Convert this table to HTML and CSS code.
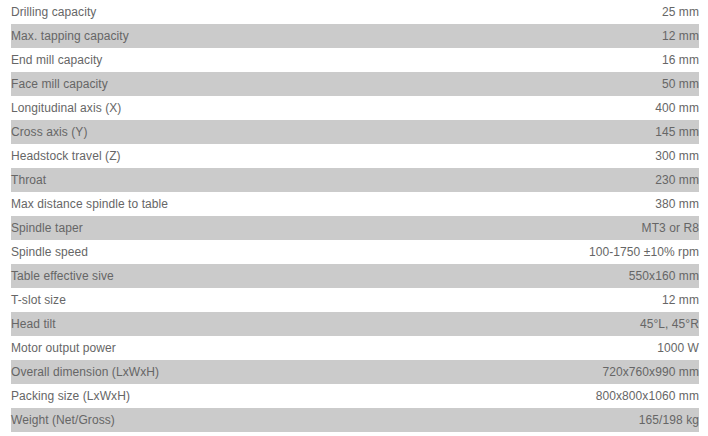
FILE: index.html
```html
<!DOCTYPE html>
<html>
<head>
<meta charset="utf-8">
<link rel="stylesheet" href="styles.css">
</head>
<body>
<table class="specs">
<tbody>
<tr><td>Drilling capacity</td><td class="val">25 mm</td></tr>
<tr><td>Max. tapping capacity</td><td class="val">12 mm</td></tr>
<tr><td>End mill capacity</td><td class="val">16 mm</td></tr>
<tr><td>Face mill capacity</td><td class="val">50 mm</td></tr>
<tr><td>Longitudinal axis (X)</td><td class="val">400 mm</td></tr>
<tr><td>Cross axis (Y)</td><td class="val">145 mm</td></tr>
<tr><td>Headstock travel (Z)</td><td class="val">300 mm</td></tr>
<tr><td>Throat</td><td class="val">230 mm</td></tr>
<tr><td>Max distance spindle to table</td><td class="val">380 mm</td></tr>
<tr><td>Spindle taper</td><td class="val">MT3 or R8</td></tr>
<tr><td>Spindle speed</td><td class="val">100-1750 ±10% rpm</td></tr>
<tr><td>Table effective sive</td><td class="val">550x160 mm</td></tr>
<tr><td>T-slot size</td><td class="val">12 mm</td></tr>
<tr><td>Head tilt</td><td class="val">45°L, 45°R</td></tr>
<tr><td>Motor output power</td><td class="val">1000 W</td></tr>
<tr><td>Overall dimension (LxWxH)</td><td class="val">720x760x990 mm</td></tr>
<tr><td>Packing size (LxWxH)</td><td class="val">800x800x1060 mm</td></tr>
<tr><td>Weight (Net/Gross)</td><td class="val">165/198 kg</td></tr>
</tbody>
</table>
</body>
</html>
```
FILE: styles.css
```css
html, body {
  margin: 0;
  padding: 0;
  background: #ffffff;
}
body {
  padding: 0 0 0 11px;
  font-family: "Liberation Sans", Arial, sans-serif;
  font-size: 12px;
  color: #666666;
}
.specs {
  width: 688px;
  border-collapse: collapse;
  border-spacing: 0;
}
.specs td {
  height: 24px;
  padding: 0;
  line-height: 24px;
  white-space: nowrap;
  letter-spacing: 0.08px;
}
.specs td.val {
  text-align: right;
}
.specs tr:nth-child(even) td {
  background: #cbcbcb;
}
```
